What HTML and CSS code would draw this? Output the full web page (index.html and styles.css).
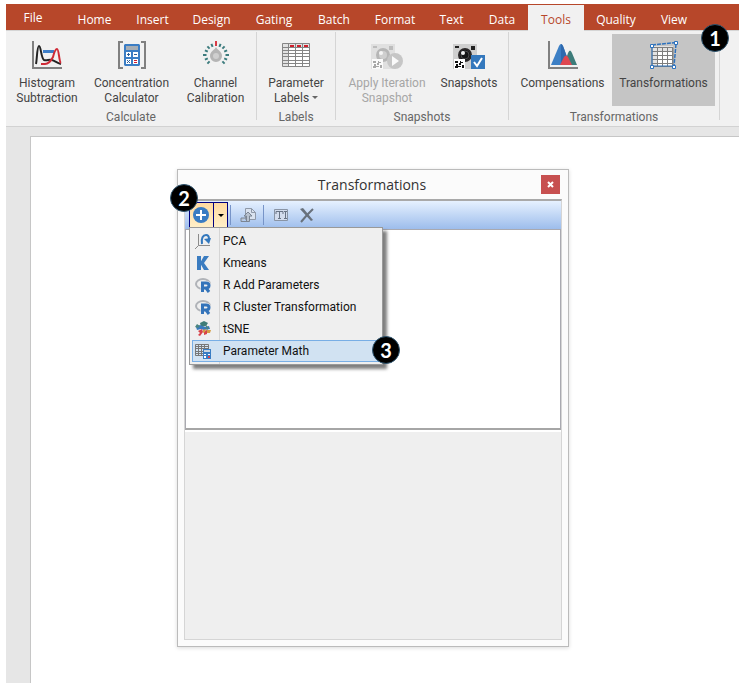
FILE: index.html
```html
<!DOCTYPE html>
<html lang="en">
<head>
<meta charset="utf-8">
<title>Transformations</title>
<link rel="stylesheet" href="styles.css">
</head>
<body>
<div class="app">
  <nav class="tabs" aria-label="Ribbon tabs">
    <button class="tab tab-file">File</button>
    <button class="tab">Home</button>
    <button class="tab">Insert</button>
    <button class="tab">Design</button>
    <button class="tab">Gating</button>
    <button class="tab">Batch</button>
    <button class="tab">Format</button>
    <button class="tab">Text</button>
    <button class="tab">Data</button>
    <button class="tab tab-active">Tools</button>
    <button class="tab">Quality</button>
    <button class="tab">View</button>
  </nav>

  <div class="ribbon">
    <section class="group">
      <div class="tools tools-calculate">
        <button class="tool">
          <svg width="30" height="28" viewBox="0 0 30 28" fill="none">
            <path d="M1 0V27H30" stroke="#808080" stroke-width="2"/>
            <path d="M11 10.500H22" stroke="#3f7fc8" stroke-width="3"/>
            <path d="M4 23C5 19 5 5 7 5S9 17 12 19C15 20 17 18 20 19S25 22 29 23" stroke="#222" stroke-width="2"/>
            <path d="M9 23H13C17 23 19 20 21 16C22 12 23 8 25 8S27 21 29 22" stroke="#cf2a36" stroke-width="2"/>
          </svg>
          <span>Histogram<br>Subtraction</span>
        </button>
        <button class="tool">
          <svg width="28" height="28" viewBox="0 0 28 28" fill="none">
            <path d="M5 1H1V27H5M23 1H27V27H23" stroke="#808080" stroke-width="2"/>
            <path d="M7 3H21L22 4V24L21 25H7L6 24V4Z" fill="#3b7dc4"/>
            <path d="M8 5H20V9H8Z" fill="#a6adb4"/>
            <path d="M8 11H13V16H8ZM15 11H20V16H15ZM8 18H13V23H8ZM15 18H20V23H15Z" fill="#fff"/>
            <path d="M9 13.500H12M10.500 12V15M16 13.500H19M9 19L12 22M12 19L9 22" stroke="#2d5f9b"/>
            <path d="M16 19.500H19M16 21.500H19" stroke="#d02030"/>
          </svg>
          <span>Concentration<br>Calculator</span>
        </button>
        <button class="tool">
          <svg width="28" height="28" viewBox="0 0 28 28" fill="none">
            <g stroke="#3d7c7e" stroke-width="2">
              <path d="M10.600 5.800L9.400 2.900M7.600 7.600L5.400 5.400M5.800 10.600L2.900 9.400M4.500 14H1M5.800 17.400L2.900 18.600M7.600 20.400L5.400 22.600"/>
              <path d="M17.400 5.800L18.600 2.900M20.400 7.600L22.600 5.400M22.200 10.600L25.100 9.400M23.500 14H27M22.200 17.400L25.100 18.600M20.400 20.400L22.600 22.600"/>
            </g>
            <path d="M14 0V5" stroke="#d73a45" stroke-width="2"/>
            <path d="M14 6C15 9 20 10 20 15A6 6 0 0 1 8 15C8 10 13 9 14 6Z" fill="#b5b5b5"/>
            <circle cx="14" cy="15" r="3" fill="#cfcfcf"/>
          </svg>
          <span>Channel<br>Calibration</span>
        </button>
      </div>
      <h2 class="group-name">Calculate</h2>
    </section>

    <section class="group">
      <div class="tools tools-labels">
        <button class="tool">
          <svg width="28" height="28" viewBox="0 0 28 28" fill="none">
            <path d="M0 2H28V26H0Z" fill="#fff"/>
            <path d="M0 2H28V6H0ZM0 6H7V26H0Z" fill="#e2e2e2"/>
            <path d="M.5 2.500H27.500V25.500H.5ZM6.500 2V26M13.500 2V26M20.500 2V26M0 6.500H28M0 9.500H28M0 12.500H28M0 15.500H28M0 19.500H28M0 22.500H28" stroke="#858585"/>
            <path d="M8 5H12M15 5H19M22 5H26" stroke="#cf1f2b" stroke-width="2"/>
          </svg>
          <span>Parameter<br>Labels <i class="caret"></i></span>
        </button>
      </div>
      <h2 class="group-name">Labels</h2>
    </section>

    <section class="group">
      <div class="tools tools-snapshots">
        <button class="tool" disabled>
          <svg width="32" height="28" viewBox="0 0 32 28" fill="none">
            <path d="M0 3H24V28H0Z" fill="#e0e0e0"/>
            <path d="M2 5H6V7H2ZM18 5H22V9H18Z" fill="#bdbdbd"/>
            <circle cx="12" cy="14" r="7" fill="#b6b6b6"/><circle cx="12" cy="14" r="4" fill="#cfcfcf"/><circle cx="10" cy="12" r="2" fill="#f5f5f5"/>
            <path d="M1 18H12V28H1Z" fill="#fafafa"/>
            <path d="M2 20H5V22H2ZM7 20H8V21H10V22H8V24H6V22H7ZM3 23H5V25H8V26H5V27H2V25H3ZM9 24H11V27H9Z" fill="#a8a8a8"/>
            <circle cx="24" cy="20" r="8" fill="#c6c6c6"/><path d="M21 15L28 20L21 25Z" fill="#fafafa"/>
          </svg>
          <span>Apply Iteration<br>Snapshot</span>
        </button>
        <button class="tool">
          <svg width="32" height="28" viewBox="0 0 32 28" fill="none">
            <path d="M0 3H24V28H0Z" fill="#cfcfcf"/>
            <path d="M2 5H6V7H2ZM18 5H22V9H18Z" fill="#222"/>
            <circle cx="12" cy="14" r="7" fill="#2b2829"/><circle cx="12" cy="14" r="5" fill="#151515"/><circle cx="12" cy="14" r="4" stroke="#4a4a4a"/><circle cx="10" cy="12" r="2" fill="#f0f0f0"/>
            <path d="M1 18H12V28H1Z" fill="#fff"/>
            <path d="M2 20H5V22H2ZM7 20H8V21H10V22H8V24H6V22H7ZM3 23H5V25H8V26H5V27H2V25H3ZM9 24H11V27H9Z" fill="#111"/>
            <path d="M18 14H32V28H18Z" fill="#3478bd"/><path d="M21 21L24 25L29 17" stroke="#fff" stroke-width="2"/>
          </svg>
          <span>Snapshots</span>
        </button>
      </div>
      <h2 class="group-name">Snapshots</h2>
    </section>

    <section class="group">
      <div class="tools tools-transformations">
        <button class="tool">
          <svg width="30" height="28" viewBox="0 0 30 28" fill="none">
            <path d="M3 24L11 5Q13 1 15 5L22 24Z" fill="#3c7fc5"/>
            <path d="M13 3Q14 3 15 5L22 24H13Z" fill="#2e69ae"/>
            <path d="M16 24L20 12Q22 7 24 12L29 24Z" fill="#3d7c7a"/>
            <path d="M12 24L16 16Q18 13 20 16L24 24Z" fill="#df4650"/>
            <path d="M1 0V27H30" stroke="#808080" stroke-width="2"/>
          </svg>
          <span>Compensations</span>
        </button>
        <button class="tool tool-pressed">
          <svg width="28" height="28" viewBox="0 0 28 28" fill="none">
            <path d="M2 5H23V26H2Z" fill="#fff"/>
            <path d="M2 5H23V11H2ZM2 5H7V26H2Z" fill="#e3e3e3"/>
            <path d="M2 6.500H23V25.500H2ZM7.500 6V26M12.500 6V26M17.500 6V26M22.500 6V26M2 10.500H23M2 14.500H23M2 18.500H23M2 22.500H23" stroke="#7e7e7e"/>
            <path d="M2 5V25H24" stroke="#2d72be"/>
            <path d="M2 4L26 1.500M26 3L24 25" stroke="#2d72be" stroke-width="1.500" stroke-dasharray="4 1"/>
            <path d="M.5 3.500H3.500V6.500H.5ZM24.500 .5H27.500V3.500H24.500ZM.5 24.500H3.500V27.500H.5ZM22.500 24.500H25.500V27.500H22.500Z" fill="#fff" stroke="#2d72be"/>
          </svg>
          <span>Transformations</span>
          <b class="badge badge-ribbon">1</b>
        </button>
      </div>
      <h2 class="group-name">Transformations</h2>
    </section>
  </div>

  <main class="workspace">
    <div class="document">
      <section class="dialog" aria-labelledby="dialog-title">
        <header class="dialog-head">
          <h1 class="dialog-title" id="dialog-title">Transformations</h1>
          <button class="close" aria-label="Close">
            <svg width="7" height="7" viewBox="0 0 7 7"><path d="M1 1L6 6M6 1L1 6" stroke="#fff" stroke-width="2"/></svg>
          </button>
        </header>
        <div class="dialog-body">
          <div class="toolbar">
            <div class="split">
              <button class="split-main" aria-label="Add">
                <svg width="16" height="16" viewBox="0 0 16 16"><circle cx="8" cy="8" r="8" fill="#3a7cc3"/><path d="M8 3V13M3 8H13" stroke="#fff" stroke-width="2"/></svg>
              </button>
              <button class="split-arrow" aria-label="Add menu">
                <svg width="6" height="3" viewBox="0 0 6 3"><path d="M0 0H6L3 3Z" fill="#000"/></svg>
              </button>
              <b class="badge badge-toolbar">2</b>
              <ul class="menu">
                <li><button class="item">
                  <svg width="16" height="16" viewBox="0 0 16 16" fill="none"><path d="M3.500 1V12.500H15M3.500 12.500L0 16" stroke="#8b8b8b"/><path d="M7 11C6 5 8 2 11 2C13 2 14 4 14 6" stroke="#3378bd" stroke-width="2"/><path d="M9 6L16 5L14 11Z" fill="#3378bd"/></svg>
                  PCA</button></li>
                <li><button class="item">
                  <svg width="16" height="16" viewBox="0 0 16 16" fill="none"><path d="M4 1V15" stroke="#3a7cc0" stroke-width="4"/><path d="M5 8L9 1H14L9 8L14 15H9Z" fill="#3a7cc0"/></svg>
                  Kmeans</button></li>
                <li><button class="item">
                  <svg width="16" height="16" viewBox="0 0 16 16" fill="none"><ellipse cx="8" cy="7" rx="7" ry="5" stroke="#b0b3b8" stroke-width="2"/><path d="M7.500 16V6H11C15 6 15 11 11 11H8M11 11L14 16" stroke="#efefef" stroke-width="4"/><path d="M7.500 15V6H11C15 6 15 11 11 11H8M11 11L14 15" stroke="#3474ba" stroke-width="3"/></svg>
                  R Add Parameters</button></li>
                <li><button class="item">
                  <svg width="16" height="16" viewBox="0 0 16 16" fill="none"><ellipse cx="8" cy="7" rx="7" ry="5" stroke="#b0b3b8" stroke-width="2"/><path d="M7.500 16V6H11C15 6 15 11 11 11H8M11 11L14 16" stroke="#efefef" stroke-width="4"/><path d="M7.500 15V6H11C15 6 15 11 11 11H8M11 11L14 15" stroke="#3474ba" stroke-width="3"/></svg>
                  R Cluster Transformation</button></li>
                <li><button class="item">
                  <svg width="16" height="16" viewBox="0 0 16 16" fill="none"><path d="M5 2L9 0L13 2L11 5L6 6Z" fill="#3e7c78"/><path d="M1 6L5 4L10 6L14 5L15 8L9 9L6 8L2 9Z" fill="#397abe"/><path d="M2 3L5 5L3 7L0 6ZM10 3L14 7L12 9Z" fill="#4b8580"/><path d="M3 10L7 8L8 11L5 15L3 14L5 12ZM9 10L12 9L12 13L9 14Z" fill="#d74149"/><path d="M8 9L11 8L10 11L8 12ZM12 9L16 9L15 12L12 12Z" fill="#d39c43"/></svg>
                  tSNE</button></li>
                <li><button class="item item-selected">
                  <svg width="16" height="16" viewBox="0 0 16 16" fill="none"><path d="M.5 1.500H13.500V12.500H.5ZM3.500 1V13M6.500 1V13M9.500 1V13M0 3.500H14M0 5.500H14M0 8.500H14M0 10.500H14" stroke="#777"/><path d="M8 6H16V16H8Z" fill="#397dc4"/><path d="M9 7H15V9H9Z" fill="#ccd6df"/><path d="M9 11H11V12H9ZM9 13H11V15H9ZM13 11H15V12H13Z" fill="#fff"/><path d="M13 13H15V15H13Z" fill="#db4050"/></svg>
                  Parameter Math</button><b class="badge badge-menu">3</b></li>
              </ul>
            </div>
            <i class="divider"></i>
            <button class="icon-button" aria-label="Import" disabled>
              <svg width="16" height="16" viewBox="0 0 16 16" fill="none"><path d="M5.500 1.500H11.500L15.500 5.500V12.500H5.500Z" fill="#d9e2ef" stroke="#8f99a8"/><path d="M11.500 1.500V5.500H15.500" stroke="#8f99a8"/><path d="M1 14.500H6.500V9H4L8 5L12 9H9.500V14.500H1V11H6" fill="#b9c3d0" stroke="#7b8593"/></svg>
            </button>
            <i class="divider"></i>
            <button class="icon-button" aria-label="Rename" disabled>
              <svg width="16" height="16" viewBox="0 0 16 16" fill="none"><path d="M1.500 2.500H14.500V13.500H1.500Z" fill="#d3dced" stroke="#8994a5"/><path d="M3 7V4.500H10V7M6.500 4V12M5 11.500H8M11 4.500H14M12.500 4V12M11 11.500H14" stroke="#687384"/></svg>
            </button>
            <button class="icon-button" aria-label="Delete" disabled>
              <svg width="16" height="16" viewBox="0 0 16 16" fill="none"><path d="M1 2L4 1L14 13L12 14Z" fill="#68717c"/><path d="M14 2L8 8L2 15" stroke="#68717c" stroke-width="2"/></svg>
            </button>
          </div>
          <div class="list"></div>
          <div class="details"></div>
        </div>
      </section>
    </div>
  </main>
</div>
</body>
</html>
```
FILE: styles.css
```css
* { box-sizing: border-box; }

body {
  margin: 0;
  padding: 4px 8px 4px 6px;
  background: #fff;
  color: #444;
  font: 12px/15px "Open Sans", "Noto Sans", sans-serif;
}

button {
  margin: 0;
  padding: 0;
  border: 0;
  background: none;
  color: inherit;
  font: inherit;
}

h1, h2, ul { margin: 0; padding: 0; font-weight: normal; list-style: none; }
svg { display: block; flex: none; }

.app { display: flex; flex-direction: column; min-height: calc(100vh - 8px); }

/* Tabs */
.tabs {
  display: grid;
  grid-template-columns: 58px 61px 55px 63px 62px 58px 64px 49px 52px 56px 64px 52px;
  height: 27px;
  background: #b7472a;
  border-bottom: 1px solid #d5d5d5;
}
.tab { padding-top: 4px; color: #fff; white-space: nowrap; }
.tab-file { padding: 0 4px 0 0; }
.tab-active {
  margin: 1px 0 -1px;
  padding-top: 3px;
  background: #f1f1f1;
  color: #b7472a;
}

/* Ribbon */
.ribbon {
  display: flex;
  height: 96px;
  padding-top: 1px;
  background: #f1f1f1;
  border-bottom: 1px solid #d2d2d2;
}
.group {
  display: flex;
  flex-direction: column;
  height: 88px;
  border-right: 1px solid #d5d5d5;
}
.tools { display: grid; padding: 2px 4px 0; }
.tools-calculate { grid-template-columns: 74px 95px 73px; }
.tools-labels { grid-template-columns: 70px; }
.tools-snapshots { grid-template-columns: 94px 70px; }
.tools-transformations { grid-template-columns: 99px 103px; }
.tool {
  position: relative;
  display: flex;
  flex-direction: column;
  align-items: center;
  gap: 7px;
  height: 72px;
  padding-top: 7px;
  font-family: Roboto, "Open Sans", sans-serif;
  white-space: nowrap;
}
.tool:disabled { color: #a6a6a6; }
.tool-pressed { background: #c5c5c5; }
.group-name {
  padding-top: 4px;
  color: #666;
  font: 12px/15px Roboto, "Open Sans", sans-serif;
  text-align: center;
}
.caret {
  display: inline-block;
  border: 3px solid transparent;
  border-top-color: #666;
  border-bottom: 0;
  vertical-align: 3px;
}

/* Numbered callouts */
.badge {
  position: absolute;
  width: 28px;
  height: 28px;
  border: 1px solid #2f5671;
  border-radius: 50%;
  background: #000;
  color: #fff;
  font: bold 20px/26px Lato, "Open Sans", sans-serif;
  text-align: center;
}
.badge-ribbon { top: -10px; right: -14px; }
.badge-toolbar { top: -19px; left: -20px; }
.badge-menu { top: -4px; right: -18px; }

/* Workspace */
.workspace {
  display: flex;
  flex: 1;
  padding: 9px 0 0 24px;
  background: #e6e6e6;
}
.document {
  flex: 1;
  padding: 32px 0 36px 146px;
  background: #fff;
  border: 1px solid #c6c6c6;
  border-width: 1px 0 0 1px;
}

/* Dialog */
.dialog {
  width: 392px;
  padding: 0 6px 6px;
  background: #fbfbfb;
  border: 1px solid #bbb;
  box-shadow: 0 1px 4px rgba(0, 0, 0, .15);
}
.dialog-head {
  display: grid;
  grid-template-columns: 19px 1fr 19px;
  align-items: center;
  height: 29px;
  padding-right: 2px;
}
.dialog-title {
  grid-column: 2;
  color: #333;
  font-size: 14px;
  line-height: 20px;
  text-align: center;
}
.close {
  display: grid;
  place-items: center;
  height: 19px;
  background: #c75050;
}
.dialog-body { border: 1px solid #d5d5d5; border-top: 2px solid #a9a9a9; }
.toolbar {
  display: flex;
  align-items: center;
  height: 28px;
  padding-left: 4px;
  background: linear-gradient(#e6f1ff, #9dbdec);
}
.split {
  position: relative;
  display: flex;
  height: 26px;
  border: 1px solid #000080;
  background: linear-gradient(#ffd9a0, #ffefc8);
}
.split-main, .split-arrow { display: grid; place-items: center; }
.split-main { width: 24px; padding-right: 1px; border-right: 1px solid #000080; }
.split-arrow { width: 13px; }
.divider { width: 1px; height: 20px; margin: 0 4px 0 2px; background: #7794c8; }
.icon-button {
  display: grid;
  place-items: center;
  width: 26px;
  height: 24px;
}

.list {
  height: 201px;
  background: #fff;
  border: 1px solid #a9a9b0;
  border-bottom: 2px solid #a6a6a6;
}
.details {
  height: 209px;
  background: #efefef;
  border-top: 2px solid #fff;
}

/* Drop-down menu */
.menu {
  position: absolute;
  z-index: 1;
  top: 24px;
  left: -1px;
  width: 194px;
  padding: 2px 0 2px 2px;
  background: linear-gradient(90deg, #efefef 29px, #d5d5d5 29px, #d5d5d5 30px, #efefef 30px);
  border: 1px solid #999;
  box-shadow: 4px 4px 3px rgba(0, 0, 0, .5);
}
.menu li { position: relative; }
.item {
  display: flex;
  align-items: center;
  gap: 12px;
  width: 100%;
  height: 22px;
  padding-left: 2px;
  border: 1px solid transparent;
  color: #111;
  font: 12px/15px Roboto, "Open Sans", sans-serif;
  white-space: nowrap;
}
.item-selected { background: #d1e2f2; border-color: #78aee5; }
```
